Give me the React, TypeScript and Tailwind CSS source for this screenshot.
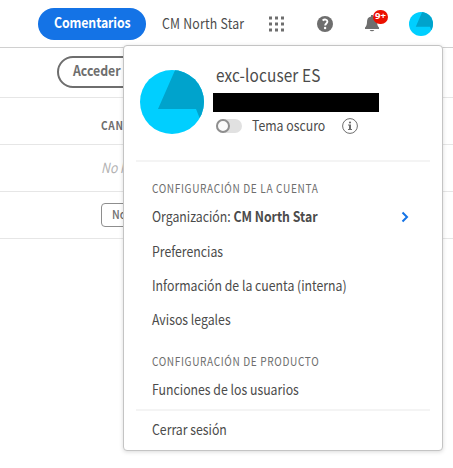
import type { ReactNode } from "react";

function Avatar({ className }: { className: string }) {
  return (
    <svg viewBox="0 0 64 64" className={className}>
      <clipPath id="disc">
        <circle cx="32" cy="32" r="32" />
      </clipPath>
      <g clipPath="url(#disc)">
        <rect width="64" height="64" fill="#00cfff" />
        <path d="M36 -2 L18 39 H56 L60 49 L70 40 V-2 Z" fill="#00a3cc" />
      </g>
    </svg>
  );
}

function Narrow({ children }: { children: ReactNode }) {
  return <span className="inline-block origin-left -translate-y-px scale-x-[0.877]">{children}</span>;
}

function Section({ children }: { children: ReactNode }) {
  return (
    <div className="text-[11.5px] leading-4 tracking-[0.72px] text-[#6e6e6e]">
      <Narrow>{children}</Narrow>
    </div>
  );
}

function Item({ children }: { children: ReactNode }) {
  return <div className="flex h-[34.4px] items-center justify-between text-sm text-[#4b4b4b]">{children}</div>;
}

function Header() {
  return (
    <header className="flex h-12 items-center border-b border-[#d0d0d0] pl-[38px] pr-5">
      <button className="mt-px h-8 w-[108px] shrink-0 rounded-full bg-[#1473e6] pb-0.5 pl-4 text-left text-sm font-bold tracking-[-0.1px] text-white">
        <Narrow>Comentarios</Narrow>
      </button>
      <span className="ml-4 w-[106px] pt-px text-sm tracking-[0.25px] text-[#4b4b4b]">
        <Narrow>CM North Star</Narrow>
      </span>
      <svg className="mt-px h-[17px] w-4 shrink-0 fill-[#6e6e6e]" viewBox="0 0 16 16">
        {[0, 6, 12].map((y) => [0, 6, 12].map((x) => <rect key={`${x}-${y}`} x={x + 1} y={y} width="3" height="3" />))}
      </svg>
      <svg className="ml-[33px] mt-px h-4 w-4 shrink-0" viewBox="0 0 16 16">
        <circle cx="8" cy="8" r="8" fill="#6e6e6e" />
        <path d="M5.6 4.4C7.5 3 10.4 3.4 10.4 5.6C10.4 7.4 8.2 7.5 8.2 9.5" fill="none" stroke="white" strokeWidth="1.9" />
        <circle cx="8.1" cy="12" r="1.2" fill="white" />
      </svg>
      <div className="relative ml-[31px] h-[18px] w-4 shrink-0">
        <svg className="h-[18px] w-4 fill-[#6e6e6e]" viewBox="0 0 16 18">
          <path d="M7 0h2v1.5C12 2 13 4 13 7c0 3 1 4.500 2 5.500V14H1v-1.500C2 11.500 3 10 3 7c0-3 1-5 4-5.500z" />
          <path d="M5.700 15h4.600a2.400 1.900 0 0 1-4.600 0z" />
        </svg>
        <span className="absolute -top-[5px] left-[9px] flex h-[14px] w-[15px] items-center justify-center rounded-full bg-[#eb1000] font-['Open_Sans'] text-[9.5px] font-bold text-white">
          9+
        </span>
      </div>
      <Avatar className="ml-auto h-6 w-6 shrink-0" />
    </header>
  );
}

function AccountMenu() {
  return (
    <div className="absolute left-[123px] top-[45px] h-[406px] w-80 rounded border border-[#c4c4c4] bg-white px-3 shadow-[0_1px_4px_rgba(0,0,0,0.15)]">
      <div className="flex h-[114px] pl-1 pt-6">
        <Avatar className="h-16 w-16 shrink-0" />
        <div className="pl-[9px]">
          <div className="-mt-1 h-[27px] pl-[3px] text-[17.5px] leading-5 tracking-[0.15px] text-[#4b4b4b]">
            <Narrow>exc-locuser ES</Narrow>
          </div>
          <div className="h-[19px] w-[166px] bg-black" />
          <div className="mt-1 flex h-5 items-center pl-[3px] text-sm text-[#4b4b4b]">
            <span className="h-[14px] w-[26px] rounded-full bg-[#e1e1e1]">
              <span className="block h-[14px] w-[14px] rounded-full border-2 border-[#8e8e8e] bg-[#fafafa]" />
            </span>
            <span className="ml-[10px] w-[90px]">
              <Narrow>Tema oscuro</Narrow>
            </span>
            <svg className="h-4 w-4" viewBox="0 0 16 16">
              <circle cx="8" cy="8" r="7.400" fill="none" stroke="#6e6e6e" strokeWidth="1" />
              <circle cx="8" cy="4.500" r="1.100" fill="#6e6e6e" />
              <path d="M6 6.500h3v4.500h1v1H6v-1h1v-3.500H6z" fill="#6e6e6e" />
            </svg>
          </div>
        </div>
      </div>
      <div className="h-0.5 bg-[#f4f4f4]" />
      <div className="px-4 pt-[19px]">
        <Section>CONFIGURACIÓN DE LA CUENTA</Section>
        <div className="pt-[3px]">
          <Item>
            <Narrow>
              Organización: <b>CM North Star</b>
            </Narrow>
            <svg className="mr-[5px] h-3 w-2" viewBox="0 0 8 12">
              <path d="M1.500 1.500L6 6l-4.500 4.500" fill="none" stroke="#1473e6" strokeWidth="2" />
            </svg>
          </Item>
          <Item><Narrow>Preferencias</Narrow></Item>
          <Item><Narrow>Información de la cuenta (interna)</Narrow></Item>
          <Item><Narrow>Avisos legales</Narrow></Item>
        </div>
        <div className="pt-4">
          <Section>CONFIGURACIÓN DE PRODUCTO</Section>
        </div>
        <div className="pt-[3px]">
          <Item><Narrow>Funciones de los usuarios</Narrow></Item>
        </div>
      </div>
      <div className="mt-0.5 h-0.5 bg-[#f4f4f4]" />
      <div className="px-4 pt-0.5">
        <Item><Narrow>Cerrar sesión</Narrow></Item>
      </div>
    </div>
  );
}

export default function App() {
  return (
    <div className="relative h-[468px] w-[453px] overflow-hidden whitespace-nowrap bg-white font-['Noto_Sans_CJK_SC','Noto_Sans',sans-serif]">
      <Header />
      <div className="h-[50px] border-b border-[#e6e6e6] pl-[57px] pt-2">
        <button className="h-8 w-40 rounded-full border-2 border-[#6e6e6e] pb-0.5 pl-[14px] text-left text-sm font-bold text-[#6e6e6e]">
          <Narrow>Acceder</Narrow>
        </button>
      </div>
      <div className="flex h-[47px] items-center border-b border-[#e6e6e6] pl-[101px] pt-3 text-[11.5px] font-bold tracking-[0.8px] text-[#6e6e6e]">
        <Narrow>CANALES</Narrow>
      </div>
      <div className="flex h-[47px] items-center border-b border-[#e6e6e6] pl-[101px] text-sm italic text-[#b3b3b3]">
        <Narrow>No hay</Narrow>
      </div>
      <div className="flex h-[47px] items-center border-b border-[#e6e6e6] pl-[101px]">
        <span className="flex h-6 w-20 items-center rounded border border-[#8e8e8e] pl-[10px] text-xs font-medium text-[#6e6e6e]">
          <Narrow>No</Narrow>
        </span>
      </div>
      <AccountMenu />
    </div>
  );
}
